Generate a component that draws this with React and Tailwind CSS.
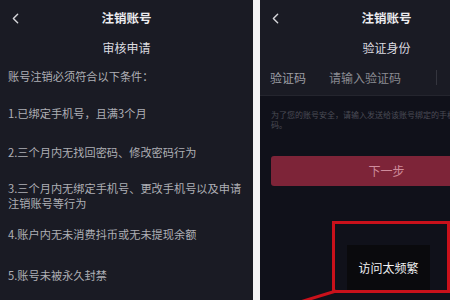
import { ChevronLeft } from 'lucide-react'

const font = { fontFamily: '"Noto Sans CJK SC", "Noto Sans", sans-serif' }

function Header({ title, sub }) {
  return (
    <div>
      <div className="h-[36px] flex items-center">
        <div className="w-[30px] pl-[7px] flex items-center">
          <ChevronLeft size={17} strokeWidth={2} className="text-[#d6d6da]" />
        </div>
        <div className="flex-1 text-center text-[12.5px] font-semibold text-[#ececef]">{title}</div>
        <div className="w-[30px]" />
      </div>
      <div className="h-[24px] flex items-center justify-center text-[12px] text-[#dcdce0]">{sub}</div>
    </div>
  )
}

function LeftPanel() {
  return (
    <div className="w-[253px] shrink-0 h-full bg-[#1a1b24] overflow-hidden">
      <Header title="注销账号" sub="审核申请" />
      <div className="pl-[8px] text-[11.2px] leading-[15px] text-[#aeafb5] whitespace-nowrap">
        <p className="mt-[9px]">账号注销必须符合以下条件：</p>
        <p className="mt-[22px]">1.已绑定手机号，且满3个月</p>
        <p className="mt-[24px]">2.三个月内无找回密码、修改密码行为</p>
        <p className="mt-[21px]">3.三个月内无绑定手机号、更改手机号以及申请</p>
        <p>注销账号等行为</p>
        <p className="mt-[16px]">4.账户内无未消费抖币或无未提现余额</p>
        <p className="mt-[26px]">5.账号未被永久封禁</p>
      </div>
    </div>
  )
}

function RightPanel() {
  return (
    <div className="w-[253px] shrink-0 h-full flex flex-col bg-[#10111a]">
      <div className="bg-[#1a1b24]">
        <Header title="注销账号" sub="验证身份" />
        <div className="h-[36px] flex items-center border-b border-[#24252e] text-[12px]">
          <span className="pl-[10px] w-[69px] text-[#9d9ea4]">验证码</span>
          <span className="text-[#8a8b92]">请输入验证码</span>
          <span className="ml-auto mr-[76px] w-px h-[15px] bg-[#34353e]" />
        </div>
      </div>
      <div className="px-[11px]">
        <p className="mt-[14px] text-[8px] leading-[10px] text-[#4b4c56]">
          为了您的账号安全，请输入发送给该账号绑定的手机号的验证码。
        </p>
        <div className="mt-[26px] h-[30px] rounded-[3px] bg-[#7d2438] flex items-center justify-center text-[12px] text-[#cf8c9c]">
          下一步
        </div>
      </div>
    </div>
  )
}

export default function App() {
  return (
    <div className="relative w-[450px] h-[300px] overflow-hidden flex bg-[#10111a]" style={font}>
      <LeftPanel />
      <div className="w-[7px] shrink-0 h-full bg-[#f4f4f6]" />
      <RightPanel />

      <div className="absolute left-[332px] top-[221px] w-[118px] h-[72px] border-[3px] border-[#c9111b]" />
      <div className="absolute left-[347px] top-[245px] w-[83px] h-[45px] bg-[#0a0a0d] flex items-center justify-center text-[12px] text-[#f0f0f2]">
        访问太频繁
      </div>
      <svg className="absolute left-0 top-0" width="450" height="300">
        <line x1="300" y1="302" x2="336" y2="291" stroke="#c9111b" strokeWidth="3" />
      </svg>
    </div>
  )
}
